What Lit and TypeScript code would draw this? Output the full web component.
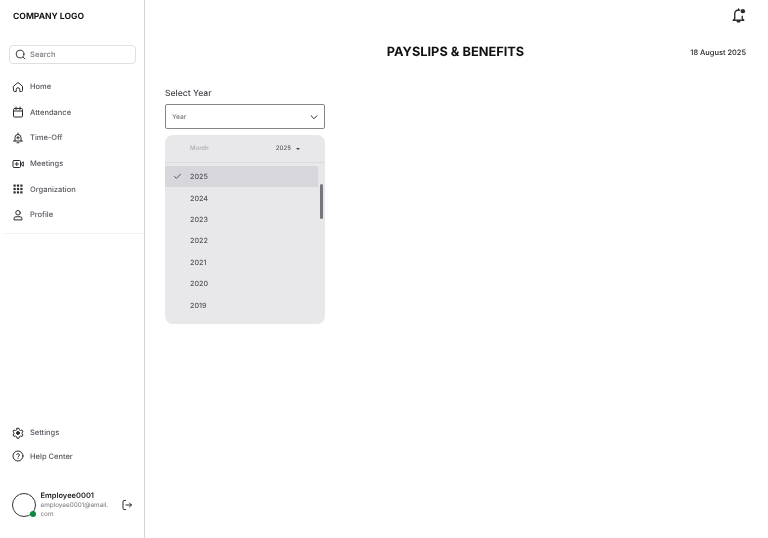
import { LitElement, html, css, svg } from "lit";
import { customElement } from "lit/decorators.js";

const ic = (body: unknown, size = 12, sw = 2) => html`<svg width=${size} height=${size} viewBox="0 0 24 24" fill="none" stroke="#2b2b30" stroke-width=${sw} stroke-linecap="round" stroke-linejoin="round">${body}</svg>`;

const nav: [string, unknown][] = [
  ["Home", svg`<path d="M3 10.500 12 3l9 7.500V19a2 2 0 0 1-2 2h-3.500v-4a3.500 3.500 0 0 0-7 0v4H5a2 2 0 0 1-2-2z"/>`],
  ["Attendance", svg`<rect x="3" y="5" width="18" height="17" rx="2"/><path d="M3 10h18M8 2v5M16 2v5"/>`],
  ["Time-Off", svg`<path d="M6 18V11a6 6 0 0 1 12 0v7M3 18h18M12 2v3M10 21.500h4"/><path d="M12 9v5M9.500 11.500h5"/>`],
  ["Meetings", svg`<rect x="2" y="5" width="15" height="14" rx="2"/><path d="M22 8l-5 4 5 4zM9.500 9v6M6.500 12h6"/>`],
  ["Organization", svg`<g fill="#2b2b30" stroke="none"><rect x="3" y="3" width="4.400" height="4.400"/><rect x="9.800" y="3" width="4.400" height="4.400"/><rect x="16.600" y="3" width="4.400" height="4.400"/><rect x="3" y="9.800" width="4.400" height="4.400"/><rect x="9.800" y="9.800" width="4.400" height="4.400"/><rect x="16.600" y="9.800" width="4.400" height="4.400"/><rect x="3" y="16.600" width="4.400" height="4.400"/><rect x="9.800" y="16.600" width="4.400" height="4.400"/><rect x="16.600" y="16.600" width="4.400" height="4.400"/></g>`],
  ["Profile", svg`<circle cx="12" cy="7.500" r="4.500"/><path d="M4 21v-1.500a4 4 0 0 1 4-4h8a4 4 0 0 1 4 4V21z"/>`],
];
const settings = svg`<circle cx="12" cy="12" r="3" fill="#2b2b30"/><path d="M10 2.500h4l.6 3 2.600 1.500 2.900-1 2 3.500-2.300 2v2l2.300 2-2 3.500-2.900-1-2.600 1.500-.6 3h-4l-.6-3-2.600-1.500-2.900 1-2-3.500 2.300-2v-2l-2.300-2 2-3.500 2.900 1 2.600-1.500z"/>`;
const help = svg`<circle cx="12" cy="12" r="10"/><path d="M9.200 9a3 3 0 0 1 5.700 1c0 2-2.900 2.500-2.900 4M12 17.500v.01"/>`;
const years = ["2024", "2023", "2022", "2021", "2020", "2019"];

@customElement("app-root")
export class AppRoot extends LitElement {
  static styles = css`
    :host { display: block; width: 768px; height: 538px; overflow: hidden; background: #fff; font-family: Inter, "Liberation Sans", sans-serif; color: #1d1d21; text-rendering: geometricPrecision; }
    .page { display: flex; height: 538px; will-change: transform; }
    .side { width: 144px; flex: none; border-right: 1px solid #d4d4d8; display: flex; flex-direction: column; }
    .logo { font-size: 8.550px; font-weight: 700; line-height: 12px; padding: 11px 0 0 13px; height: 12px; color: #111; }
    .search { margin: 22px 8px 0 9px; height: 17px; border: 1px solid #e0e0e3; border-radius: 4px; display: flex; align-items: center; gap: 4px; padding-left: 5px; font-size: 7.600px; font-weight: 500; color: #7c7c84; }
    .nav { margin: 10px 0 0 4px; padding-bottom: 5px; border-bottom: 1px solid #f1f1f3; display: flex; flex-direction: column; }
    .item { height: 25.600px; display: flex; align-items: center; gap: 6px; padding-left: 8px; font-size: 7.500px; font-weight: 500; color: #55555d; flex: none; }
    .spacer { flex: 1; }
    .item.low { height: 23.500px; margin-left: 4px; }
    .user { display: flex; align-items: center; margin: 22px 0 18px 12px; height: 30px; }
    .avatar { width: 24px; height: 24px; margin-top: -1px; box-sizing: border-box; border: 1px solid #333; border-radius: 50%; position: relative; flex: none; }
    .dot { position: absolute; right: -1px; bottom: -1px; width: 6px; height: 6px; border-radius: 50%; background: #0a8a3c; }
    .who { margin-left: 4.500px; width: 72px; flex: none; }
    .name { font-size: 7.500px; font-weight: 600; line-height: 10px; color: #1d1d21; }
    .mail { font-size: 6.350px; line-height: 9.500px; color: #75757d; }
    .out { margin-left: 8px; margin-top: -1px; display: flex; }
    .main { flex: 1; display: flex; flex-direction: column; padding: 0 22px 0 20px; min-width: 0; }
    .bell { align-self: flex-end; margin: 8px 0 0 0; height: 16px; display: flex; }
    .head { height: 22px; margin-top: 17px; display: grid; grid-template-columns: 1fr auto 1fr; align-items: center; }
    h1 { grid-column: 2; margin: 0; font-size: 12.800px; font-weight: 700; color: #111; }
    .date { justify-self: end; font-size: 7.450px; font-weight: 500; color: #222; }
    .label { margin-top: 25px; font-size: 8.600px; font-weight: 500; line-height: 12px; color: #45454c; }
    .select { margin-top: 4px; width: 160px; height: 25px; box-sizing: border-box; border: 1px solid #85858c; border-radius: 2px; display: flex; align-items: center; justify-content: space-between; padding: 0 5px 0 6px; font-size: 6.700px; font-weight: 500; color: #7a7a82; }
    .menu { margin-top: 6px; width: 160px; height: 189px; background: #e8e8ea; border-radius: 8px; position: relative; }
    .mhead { height: 27px; border-bottom: 1px solid #dcdce0; display: flex; align-items: center; font-size: 6.100px; font-weight: 500; }
    .month { margin-left: 25px; color: #adadb3; flex: 1; }
    .yr { color: #5f5f66; margin-right: 25px; display: flex; align-items: center; gap: 5px; }
    .caret { width: 0; height: 0; border: 2px solid transparent; border-top: 2.200px solid #444; border-bottom: 0; }
    .rows { padding-top: 3px; width: 153px; }
    .row { height: 21.400px; display: flex; align-items: center; font-size: 7.150px; font-weight: 500; color: #55555b; padding-left: 25px; position: relative; }
    .row.on { background: #d7d7db; }
    .check { position: absolute; left: 8px; top: 6px; }
    .thumb { position: absolute; right: 2px; top: 49px; width: 3px; height: 35px; border-radius: 2px; background: #77757d; }
  `;

  render() {
    return html`<div class="page">
      <aside class="side">
        <div class="logo">COMPANY LOGO</div>
        <div class="search">${ic(svg`<circle cx="11" cy="11" r="8.500"/><path d="m18 18 3.500 3.500"/>`, 11)}<span>Search</span></div>
        <nav class="nav">${nav.map(([t, i]) => html`<div class="item">${ic(i, 12)}<span>${t}</span></div>`)}</nav>
        <div class="spacer"></div>
        <div class="item low">${ic(settings, 12)}<span>Settings</span></div>
        <div class="item low">${ic(help, 12)}<span>Help Center</span></div>
        <div class="user">
          <div class="avatar"><span class="dot"></span></div>
          <div class="who"><div class="name">Employee0001</div><div class="mail">employee0001@email.<wbr>com</div></div>
          <span class="out">${ic(svg`<path d="M9 3H6a2 2 0 0 0-2 2v14a2 2 0 0 0 2 2h3M10 12h11M17 8l4 4-4 4"/>`, 12)}</span>
        </div>
      </aside>
      <main class="main">
        <div class="bell">${ic(svg`<path d="M14 3.500A6 6 0 0 0 6 9v8l-2.500 2.500h17L18 17v-4M10 22h4M12 1.500v2"/><circle cx="19" cy="5" r="3.500" fill="#2b2b30" stroke="none"/>`, 15, 2.200)}</div>
        <div class="head"><h1>PAYSLIPS &amp; BENEFITS</h1><div class="date">18 August 2025</div></div>
        <div class="label">Select Year</div>
        <div class="select"><span>Year</span>${ic(svg`<path d="m5 9 7 7 7-7"/>`, 10, 2.400)}</div>
        <div class="menu">
          <div class="mhead"><span class="month">Month</span><span class="yr">2025 <i class="caret"></i></span></div>
          <div class="rows">
            <div class="row on"><span class="check">${ic(svg`<path d="m4 12 5 5L20 6"/>`, 9)}</span>2025</div>
            ${years.map((y) => html`<div class="row">${y}</div>`)}
          </div>
          <div class="thumb"></div>
        </div>
      </main>
    </div>`;
  }
}
